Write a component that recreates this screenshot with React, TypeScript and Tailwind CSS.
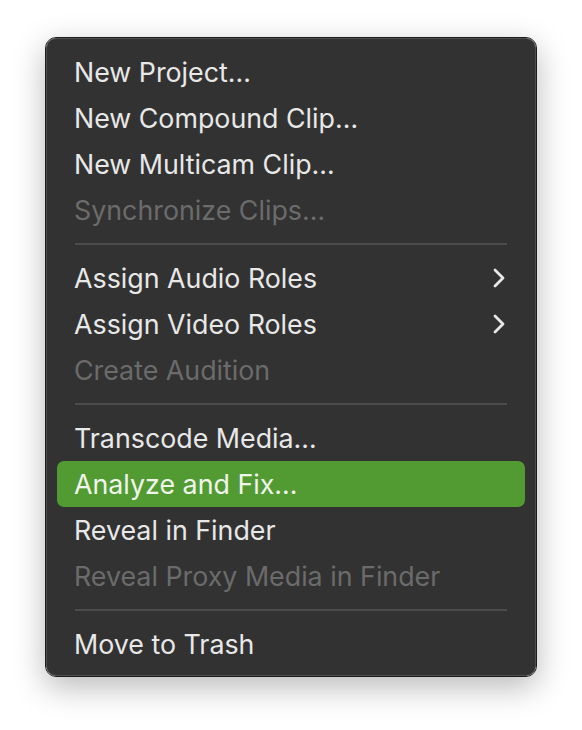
import React from "react";

type Item = { label: string; disabled?: boolean; sub?: boolean; active?: boolean } | "sep";

const items: Item[] = [
  { label: "New Project…" },
  { label: "New Compound Clip…" },
  { label: "New Multicam Clip…" },
  { label: "Synchronize Clips…", disabled: true },
  "sep",
  { label: "Assign Audio Roles", sub: true },
  { label: "Assign Video Roles", sub: true },
  { label: "Create Audition", disabled: true },
  "sep",
  { label: "Transcode Media…" },
  { label: "Analyze and Fix…", active: true },
  { label: "Reveal in Finder" },
  { label: "Reveal Proxy Media in Finder", disabled: true },
  "sep",
  { label: "Move to Trash" },
];

function Chevron() {
  return (
    <svg width="12" height="20" viewBox="0 0 12 20" fill="none">
      <path d="M2 2 L10 10 L2 18" stroke="#e8e8e8" strokeWidth="2.8" strokeLinecap="round" strokeLinejoin="round" />
    </svg>
  );
}

export default function App() {
  return (
    <div className="min-h-[730px] w-[582px] bg-white pt-[37px] pl-[45px]" style={{ fontFamily: "Inter, 'Noto Sans', sans-serif" }}>
      <div className="w-[492px] rounded-[11px] border border-[#1c1c1c] shadow-[0_10px_32px_rgba(0,0,0,0.28)]">
        <div className="rounded-[10px] border border-[#4e4e4e] bg-[#323232] px-[10px] pt-[10px] pb-[8px]">
          {items.map((it, i) =>
            it === "sep" ? (
              <div key={i} className="flex h-[22px] items-center px-[18px]">
                <div className="h-[2px] w-full bg-[#4c4c4c]" />
              </div>
            ) : (
              <div
                key={i}
                className={
                  "flex h-[46px] items-center justify-between rounded-[7px] pl-[17px] pr-[20px] text-[26.8px] leading-none " +
                  (it.active ? "bg-[#529b33] text-[#f0f5ec]" : it.disabled ? "text-[#6b6b6b]" : "text-[#e8e8e8]")
                }
              >
                <span>{it.label}</span>
                {it.sub && <Chevron />}
              </div>
            )
          )}
        </div>
      </div>
    </div>
  );
}
